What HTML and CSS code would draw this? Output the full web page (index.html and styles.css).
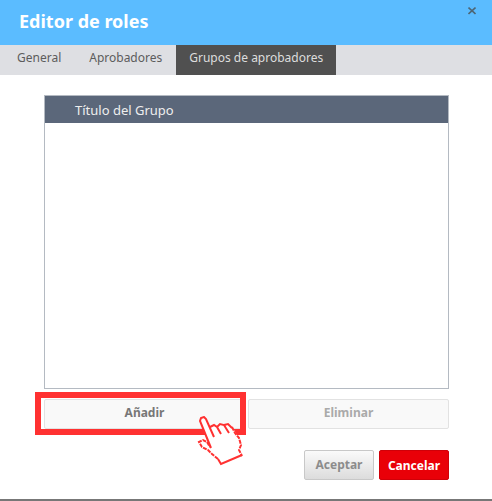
FILE: index.html
```html
<!DOCTYPE html>
<html lang="es">
<head>
    <meta charset="UTF-8">
    <meta name="viewport" content="width=device-width, initial-scale=1.0">
    <title>Editor de roles</title>
    <link rel="stylesheet" href="styles.css">
</head>
<body>
    <div class="dialog">
        <header>
            <h1>Editor de roles</h1>
            <button type="button" class="close" aria-label="Cerrar">
                <svg width="8" height="9" viewBox="0 0 8 9"><path d="M0.5 1.5L7.5 8M7.5 1.5L0.5 8"/></svg>
            </button>
        </header>

        <nav class="tabs">
            <a href="#general">General</a>
            <a href="#aprobadores">Aprobadores</a>
            <a href="#grupos" class="active">Grupos de aprobadores</a>
        </nav>

        <main>
            <div class="grid">
                <table>
                    <thead>
                        <tr>
                            <th>Título del Grupo</th>
                        </tr>
                    </thead>
                    <tbody></tbody>
                </table>
            </div>

            <div class="actions">
                <div class="marked">
                    <button type="button" class="btn-flat">Añadir</button>
                    <span class="highlight"></span>
                    <svg class="hand" width="48" height="52" viewBox="0 0 48 52">
                        <path class="fill" d="M13 31L3 5L4 2L8 2L13 11L18 9L25 8L32 9L36 12L42 23L44 29L42 34L45 39L24 48L17 40L3 30L3 26Z"/>
                        <path d="M14 32L3 5L4 2L7 1L9 3L17 21M13 11L17 9L20 11L24 18M20 11L23 8L27 9L32 17M27 9L31 8L35 12"/>
                        <path class="dash" d="M35 11L38 17L42 22L44 29L42 34L45 40"/>
                        <path d="M45 39L24 48L21 43"/>
                        <path class="dash" d="M21 43L15 38L11 34L5 31L2 26L6 24L10 26L13 31"/>
                    </svg>
                </div>
                <button type="button" class="btn-flat" disabled>Eliminar</button>
            </div>
        </main>

        <footer>
            <button type="button" class="btn">Aceptar</button>
            <button type="button" class="btn btn-red">Cancelar</button>
        </footer>
    </div>
</body>
</html>
```
FILE: styles.css
```css
* {
    box-sizing: border-box;
}

body {
    margin: 0;
    font-family: "Noto Sans", "Open Sans", sans-serif;
    font-size: 12px;
    background: #fff;
}

button {
    font-family: inherit;
    cursor: pointer;
}

.dialog {
    display: flex;
    flex-direction: column;
    min-height: 100vh;
    border-bottom: 2px solid #777;
}

header {
    display: flex;
    justify-content: space-between;
    align-items: flex-start;
    height: 45px;
    padding: 6px 16px 0 19px;
    background: #5bbcff;
}

h1 {
    margin: 0;
    font-size: 18px;
    line-height: 30px;
    color: #fff;
}

.close {
    display: flex;
    padding: 0;
    border: none;
    background: transparent;
}

.close svg {
    fill: none;
    stroke: #4d6675;
    stroke-width: 1.6;
}

.tabs {
    display: flex;
    background: #dedfe3;
}

.tabs a {
    padding: 0 14px;
    height: 30px;
    line-height: 26px;
    color: #5c5c5c;
    text-decoration: none;
    white-space: nowrap;
}

.tabs a:first-child {
    padding-left: 17px;
}

.tabs a.active {
    padding: 0 13px;
    background: #505050;
    color: #ddd;
}

main {
    display: flex;
    flex-direction: column;
    flex: 1;
    padding: 20px 43px 0 44px;
}

.grid {
    flex: 1;
    border: 1px solid #b4bac2;
}

table {
    width: 100%;
    border-collapse: collapse;
}

th {
    height: 27px;
    padding: 0 30px;
    background: #5b677a;
    color: #eee;
    font-size: 13px;
    font-weight: normal;
    text-align: left;
}

.actions {
    display: grid;
    grid-template-columns: 1fr 1fr;
    gap: 3px;
    margin-top: 10px;
}

.marked {
    position: relative;
}

.btn-flat {
    width: 100%;
    height: 30px;
    padding: 0 0 4px;
    border: 1px solid #e2e2e2;
    border-radius: 2px;
    background: #f9f9f9;
    color: #777;
    font-size: 12px;
    font-weight: bold;
}

.btn-flat:disabled {
    color: #aaa;
}

/* marco rojo sobre el boton Añadir */
.highlight {
    position: absolute;
    top: -7px;
    right: -1px;
    bottom: -6px;
    left: -9px;
    border: 6px solid #ff3131;
    pointer-events: none;
}

.hand {
    position: absolute;
    top: 17px;
    right: 0;
    fill: none;
    stroke: #ff3131;
    stroke-width: 2;
    pointer-events: none;
}

.hand .fill {
    fill: #fff;
    stroke: none;
}

.hand .dash {
    stroke-dasharray: 4 1;
}

footer {
    display: flex;
    justify-content: flex-end;
    gap: 5px;
    padding: 21px 43px 19px;
}

.btn {
    width: 70px;
    height: 30px;
    padding: 0 0 2px;
    border: 1px solid #c8c8c8;
    border-radius: 2px;
    background: linear-gradient(#fafafa, #dcdcdc);
    color: #8c8c8c;
    font-size: 12px;
    font-weight: bold;
}

.btn-red {
    padding: 0;
    border-color: #d00008;
    background: #e90008;
    color: #fff;
}
```
